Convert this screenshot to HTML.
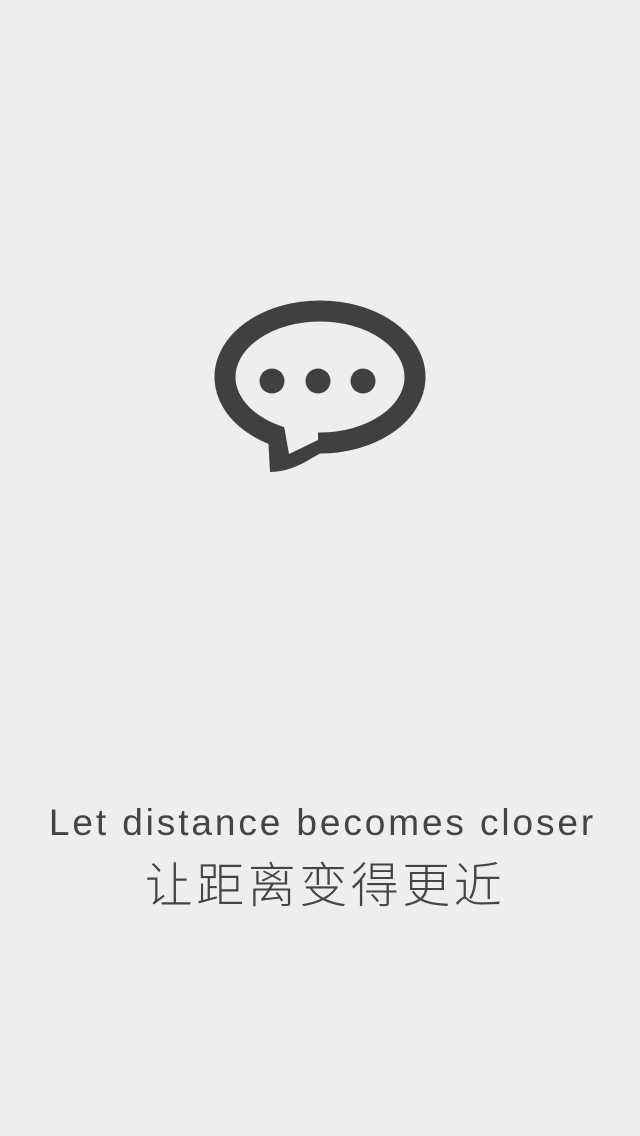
<!DOCTYPE html>
<html><head><meta charset="utf-8"><style>
html,body{margin:0;padding:0;width:640px;height:1136px;background:#eeeeee;overflow:hidden}
.en{position:absolute;left:1px;width:643px;top:801px;text-align:center;font-family:"Liberation Sans",sans-serif;font-size:37px;letter-spacing:2.9px;color:#444;line-height:44px}
.zh{position:absolute;left:3px;width:644px;top:857px;text-align:center;font-family:"Liberation Sans","Noto Sans CJK SC",sans-serif;font-size:48px;font-weight:300;letter-spacing:3.5px;color:#444;line-height:60px}
svg{position:absolute;left:0;top:0}
</style></head><body>
<svg width="640" height="1136">
<ellipse cx="320" cy="377" rx="95" ry="66" fill="none" stroke="#404040" stroke-width="21"/>
<path d="M268 436 L270 472 Q290 472 312 458 L330 448 L300 440 L292 452 L287 430 Z" fill="#404040"/>
<path d="M284 426 L289 454 L318 440 L318 426 Z" fill="#eeeeee"/>
<circle cx="272" cy="381" r="12.5" fill="#404040"/>
<circle cx="318" cy="381" r="12.5" fill="#404040"/>
<circle cx="363" cy="381" r="12.5" fill="#404040"/>
</svg>
<div class="en">Let distance becomes closer</div>
<div class="zh">让距离变得更近</div>
</body></html>
